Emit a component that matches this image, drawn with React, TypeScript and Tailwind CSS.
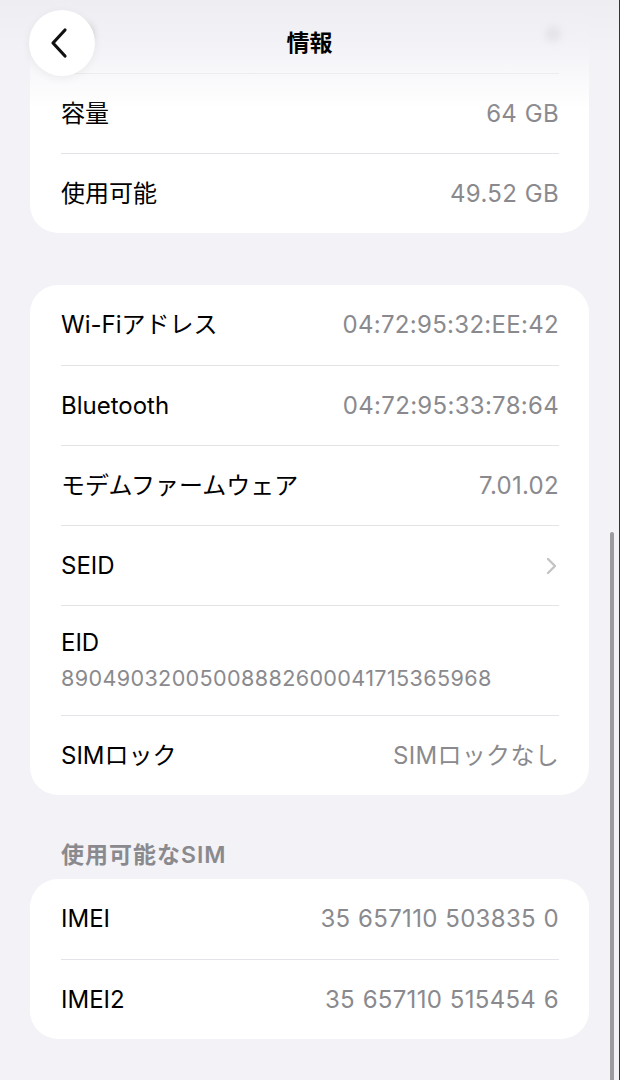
import React from "react";

const font = { fontFamily: "Inter, 'Noto Sans CJK JP', sans-serif" };

function Row({ label, value, first, chevron }: { label: string; value?: string; first?: boolean; chevron?: boolean }) {
  return (
    <div className={`ml-[31px] mr-[30px] h-[80px] flex items-center justify-between ${first ? "" : "border-t border-[#e3e3e8]"}`}>
      <span className="text-[24px] text-black">{label}</span>
      {value && <span className="text-[24px] text-[#8a8a8e] tracking-[0.3px] [word-spacing:0.6px]">{value}</span>}
      {chevron && (
        <svg width="12" height="18" viewBox="0 0 12 18" className="mr-[1px]">
          <path d="M2 2 L9 9 L2 16" fill="none" stroke="#c4c4c7" strokeWidth="2.4" strokeLinecap="round" strokeLinejoin="round" />
        </svg>
      )}
    </div>
  );
}

export default function App() {
  return (
    <div className="relative w-[620px] h-[1080px] overflow-hidden bg-[#f2f2f7] border-r border-[#333]" style={font}>
      <div className="px-[30px]">
        <div className="bg-white rounded-b-[28px] pt-[73px]">
          <Row label="容量" value="64 GB" />
          <Row label="使用可能" value="49.52 GB" />
        </div>

        <div className="bg-white rounded-[28px] mt-[52px]">
          <Row label="Wi-Fiアドレス" value="04:72:95:32:EE:42" first />
          <Row label="Bluetooth" value="04:72:95:33:78:64" />
          <Row label="モデムファームウェア" value="7.01.02" />
          <Row label="SEID" chevron />
          <div className="ml-[31px] mr-[30px] h-[110px] flex flex-col justify-center border-t border-[#e3e3e8]">
            <span className="text-[24px] text-black leading-[32px]">EID</span>
            <span className="text-[21.6px] text-[#8a8a8e] leading-[32px] mt-[3px] tracking-[0.35px]">89049032005008882600041715365968</span>
          </div>
          <Row label="SIMロック" value="SIMロックなし" />
        </div>

        <div className="pl-[31px] pt-[45px] pb-[9px] leading-[30px] text-[23px] font-semibold text-[#8a8a8e] tracking-[1px]">使用可能なSIM</div>

        <div className="bg-white rounded-[28px]">
          <Row label="IMEI" value="35 657110 503835 0" first />
          <Row label="IMEI2" value="35 657110 515454 6" />
        </div>
      </div>

      {/* header blur */}
      <div className="absolute inset-x-0 top-0 h-[108px] bg-gradient-to-b from-[#ededf2] via-[#f3f3f7]/90 to-white/0" />
      <div className="absolute left-[545px] top-[26px] w-[16px] h-[16px] rounded-full bg-[#e4e4e9] blur-[3px]" />
      <div className="absolute left-[80px] top-[24px] w-[14px] h-[18px] rounded-full bg-[#d6d6db] blur-[3px]" />

      <div className="absolute left-[29px] top-[10px] w-[66px] h-[66px] rounded-full bg-white shadow-[0_2px_10px_rgba(0,0,0,0.06)] flex items-center justify-center">
        <svg width="22" height="32" viewBox="0 0 22 32" className="-ml-[4px]">
          <path d="M16 3 L4 16 L16 29" fill="none" stroke="#111" strokeWidth="3.2" strokeLinecap="round" strokeLinejoin="round" />
        </svg>
      </div>
      <div className="absolute inset-x-0 top-[28px] text-center text-[23px] font-bold text-black leading-[30px]">情報</div>

      {/* scrollbar */}
      <div className="absolute left-[610px] top-[532px] w-[4px] h-[560px] rounded-full bg-[#9c9ca0]" />
    </div>
  );
}
